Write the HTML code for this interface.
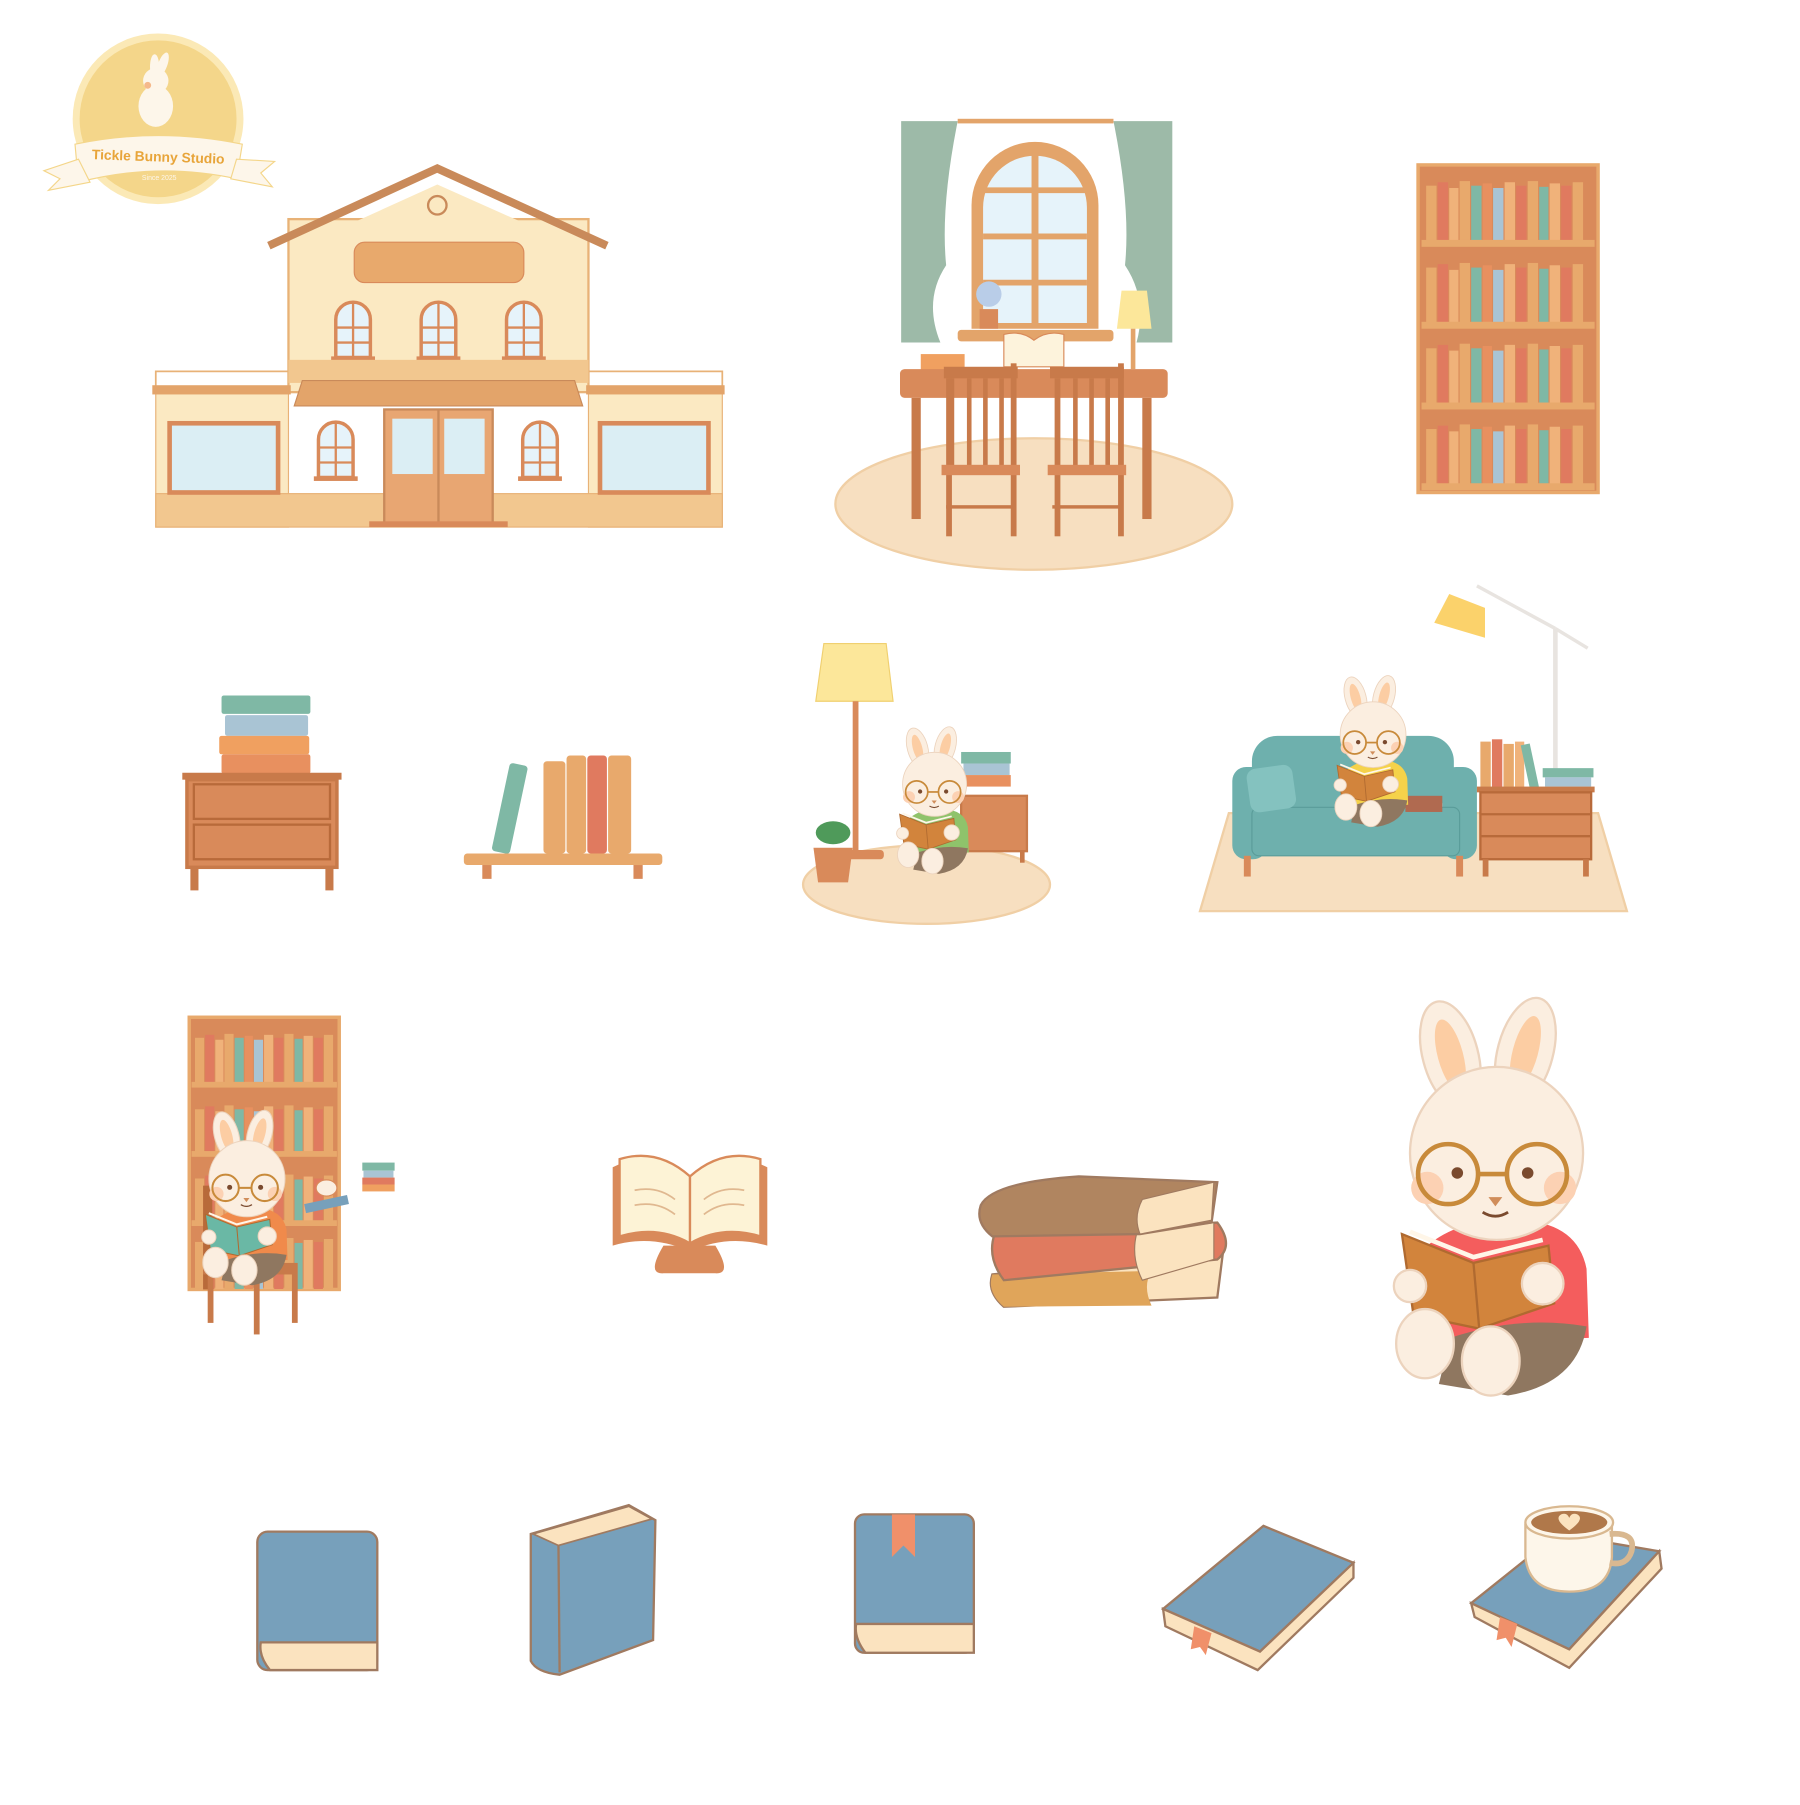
<!DOCTYPE html>
<html><head><meta charset="utf-8"><style>
html,body{margin:0;padding:0;background:#fff;}
svg{display:block;}
</style></head><body>
<svg width="1800" height="1805" viewBox="0 0 1560 1565" preserveAspectRatio="none" xmlns="http://www.w3.org/2000/svg">
<defs>
<g id="bunny">
  <ellipse cx="-40" cy="-85" rx="24" ry="48" transform="rotate(-15 -40 -85)" fill="#fbeee0" stroke="#ecd3bd" stroke-width="2"/>
  <ellipse cx="-40" cy="-85" rx="11" ry="32" transform="rotate(-15 -40 -85)" fill="#fccda3"/>
  <ellipse cx="25" cy="-88" rx="24" ry="48" transform="rotate(15 25 -88)" fill="#fbeee0" stroke="#ecd3bd" stroke-width="2"/>
  <ellipse cx="25" cy="-88" rx="11" ry="32" transform="rotate(15 25 -88)" fill="#fccda3"/>
  <path d="M-60 80 Q-30 55 20 58 Q70 60 78 100 L80 160 L-55 165 Z" style="fill:var(--shirt,#f45d5d)"/>
  <path d="M-40 160 Q20 140 78 150 Q70 200 10 210 L-50 200 Z" fill="#8f7760"/>
  <circle cx="0" cy="0" r="75" fill="#fbeee0" stroke="#ecd3bd" stroke-width="2"/>
  <circle cx="-60" cy="30" r="14" fill="#fcd1b3"/><circle cx="55" cy="30" r="14" fill="#fcd1b3"/>
  <circle cx="-42" cy="18" r="26" fill="none" stroke="#c88a3a" stroke-width="4"/>
  <circle cx="35" cy="18" r="26" fill="none" stroke="#c88a3a" stroke-width="4"/>
  <line x1="-16" y1="18" x2="9" y2="18" stroke="#c88a3a" stroke-width="4"/>
  <circle cx="-34" cy="17" r="5" fill="#7a4a2e"/><circle cx="27" cy="17" r="5" fill="#7a4a2e"/>
  <path d="M-7 38 L5 38 L-1 46 Z" fill="#d08d5a"/>
  <path d="M-12 51 Q-1 58 10 51" fill="none" stroke="#7a4a2e" stroke-width="2.5"/>
  <path d="M-82 70 L-20 95 L45 80 L50 130 L-15 152 L-72 140 Z" style="fill:var(--book,#d2843c)" stroke="#b06a30" stroke-width="2"/>
  <line x1="-20" y1="95" x2="-15" y2="152" stroke="#b06a30" stroke-width="2"/>
  <path d="M-75 68 L-20 90 L40 75" fill="none" stroke="#fff6e8" stroke-width="4"/>
  <circle cx="-75" cy="115" r="14" fill="#fbeee0" stroke="#ecd3bd" stroke-width="2"/>
  <circle cx="40" cy="113" r="18" fill="#fbeee0" stroke="#ecd3bd" stroke-width="2"/>
  <ellipse cx="-62" cy="165" rx="25" ry="30" fill="#fbeee0" stroke="#ecd3bd" stroke-width="2"/>
  <ellipse cx="-5" cy="180" rx="25" ry="30" fill="#fbeee0" stroke="#ecd3bd" stroke-width="2"/>
</g>
<g id="row">
  <rect x="0" y="8" width="9" height="48" fill="#e8a96c"/>
  <rect x="10" y="5" width="9" height="51" fill="#e07a5f"/>
  <rect x="20" y="10" width="8" height="46" fill="#f0b27a"/>
  <rect x="29" y="4" width="9" height="52" fill="#e8a96c"/>
  <rect x="39" y="8" width="9" height="48" fill="#7fb8a5"/>
  <rect x="49" y="6" width="8" height="50" fill="#e8905f"/>
  <rect x="58" y="10" width="9" height="46" fill="#a9c4d4"/>
  <rect x="68" y="5" width="9" height="51" fill="#f0b27a"/>
  <rect x="78" y="8" width="9" height="48" fill="#e07a5f"/>
  <rect x="88" y="4" width="9" height="52" fill="#e8a96c"/>
  <rect x="98" y="9" width="8" height="47" fill="#7fb8a5"/>
  <rect x="107" y="6" width="9" height="50" fill="#f0b27a"/>
  <rect x="117" y="8" width="9" height="48" fill="#e07a5f"/>
  <rect x="127" y="5" width="9" height="51" fill="#e8a96c"/>
</g>
<g id="win">
  <path d="M-15 48 L-15 15 A15 15 0 0 1 15 15 L15 48 Z" fill="#e6f3fa" stroke="#d98a5a" stroke-width="3"/>
  <line x1="0" y1="0" x2="0" y2="48" stroke="#d98a5a" stroke-width="2"/>
  <line x1="-15" y1="22" x2="15" y2="22" stroke="#d98a5a" stroke-width="2"/>
  <line x1="-15" y1="35" x2="15" y2="35" stroke="#d98a5a" stroke-width="2"/>
  <rect x="-19" y="47" width="38" height="4" fill="#d98a5a"/>
</g>
</defs>

<!-- Logo -->
<circle cx="137" cy="103" r="74" fill="#fbe9b6"/>
<circle cx="137" cy="103" r="68" fill="#f4d68a"/>
<ellipse cx="135" cy="92" rx="15" ry="18" fill="#fdf6ea"/>
<circle cx="135" cy="70" r="11" fill="#fdf6ea"/>
<ellipse cx="134" cy="58" rx="4" ry="11" fill="#fdf6ea"/><ellipse cx="141" cy="56" rx="4" ry="11" transform="rotate(20 141 56)" fill="#fdf6ea"/>
<circle cx="128" cy="74" r="3" fill="#f5b98b"/>
<path d="M65 125 Q137 110 210 125 L205 155 Q137 140 68 158 Z" fill="#fdf6ea" stroke="#f4d68a"/>
<path d="M68 138 L38 148 L52 155 L42 165 L78 158 Z" fill="#fdf6ea" stroke="#f4d68a"/>
<path d="M205 138 L238 140 L226 150 L236 162 L200 155 Z" fill="#fdf6ea" stroke="#f4d68a"/>
<text x="137" y="140" font-family="Liberation Sans, sans-serif" font-size="12" font-weight="bold" fill="#e8a53a" text-anchor="middle" transform="rotate(2 137 140)">Tickle Bunny Studio</text>
<text x="138" y="156" font-family="Liberation Sans, sans-serif" font-size="6" fill="#fdf6ea" text-anchor="middle">Since 2025</text>

<!-- House -->
<rect x="135" y="322" width="115" height="13" fill="none" stroke="#e8b277" stroke-width="1.5"/>
<rect x="510" y="322" width="116" height="13" fill="none" stroke="#e8b277" stroke-width="1.5"/>
<rect x="250" y="190" width="260" height="150" fill="#fbe9c2" stroke="#e8b277" stroke-width="2"/>
<path d="M379 160 L262 213 L498 213 Z" fill="#fbe9c2"/>
<path d="M233 213 L379 146 L526 213" fill="none" stroke="#c98a5a" stroke-width="7"/>
<circle cx="379" cy="178" r="8" fill="#fbe9c2" stroke="#c98a5a" stroke-width="2"/>
<rect x="307" y="210" width="147" height="35" rx="9" fill="#e8a96c" stroke="#d98a5a"/>
<use href="#win" x="306" y="262"/><use href="#win" x="380" y="262"/><use href="#win" x="454" y="262"/>
<rect x="135" y="335" width="115" height="122" fill="#fbe9c2" stroke="#e8b277"/>
<rect x="510" y="335" width="116" height="122" fill="#fbe9c2" stroke="#e8b277"/>
<rect x="132" y="334" width="120" height="8" fill="#e3a46a"/>
<rect x="508" y="334" width="120" height="8" fill="#e3a46a"/>
<rect x="250" y="312" width="260" height="20" fill="#f2c78f"/>
<rect x="135" y="428" width="491" height="29" fill="#f2c78f" stroke="#e8b277"/>
<path d="M262 330 L498 330 L505 352 L255 352 Z" fill="#e3a46a" stroke="#c98a5a"/>
<rect x="147" y="367" width="94" height="60" fill="#dbeef4" stroke="#d98a5a" stroke-width="4"/>
<rect x="520" y="367" width="94" height="60" fill="#dbeef4" stroke="#d98a5a" stroke-width="4"/>
<rect x="333" y="355" width="94" height="100" fill="#e8a672" stroke="#c98a5a" stroke-width="2"/>
<rect x="340" y="363" width="35" height="48" fill="#dbeef4"/><rect x="385" y="363" width="35" height="48" fill="#dbeef4"/>
<line x1="380" y1="355" x2="380" y2="455" stroke="#c98a5a" stroke-width="2"/>
<rect x="320" y="452" width="120" height="5" fill="#d98a5a"/>
<use href="#win" x="291" y="366"/><use href="#win" x="468" y="366"/>

<!-- Desk scene -->
<ellipse cx="896" cy="437" rx="172" ry="57" fill="#f7dfc0" stroke="#f0cfa5" stroke-width="2"/>
<rect x="830" y="103" width="135" height="4" fill="#e3a46a"/>
<path d="M781 105 L830 105 Q815 180 820 230 Q800 260 815 297 L781 297 Z" fill="#9dbaa8"/>
<path d="M1016 105 L965 105 Q980 180 975 230 Q995 260 985 297 L1016 297 Z" fill="#9dbaa8"/>
<path d="M842 285 L842 178 A55 55 0 0 1 952 178 L952 285 Z" fill="#e3a46a"/>
<path d="M852 280 L852 180 A45 45 0 0 1 942 180 L942 280 Z" fill="#e6f3fa"/>
<line x1="897" y1="133" x2="897" y2="280" stroke="#e3a46a" stroke-width="6"/>
<line x1="852" y1="165" x2="942" y2="165" stroke="#e3a46a" stroke-width="5"/>
<line x1="852" y1="205" x2="942" y2="205" stroke="#e3a46a" stroke-width="5"/>
<line x1="852" y1="245" x2="942" y2="245" stroke="#e3a46a" stroke-width="5"/>
<rect x="830" y="286" width="135" height="10" rx="3" fill="#e3a46a"/>
<circle cx="857" cy="255" r="11" fill="#b9cde8"/><rect x="849" y="268" width="16" height="17" fill="#d98a5a"/>
<path d="M968 285 L972 252 L994 252 L998 285 Z" fill="#fce79a"/><rect x="980" y="285" width="4" height="35" fill="#e3a46a"/>
<path d="M870 318 L870 290 Q885 286 896 295 Q908 286 922 290 L922 318 Z" fill="#fdf3dc" stroke="#d98a5a"/>
<rect x="798" y="307" width="38" height="14" fill="#f0a060"/>
<rect x="780" y="320" width="232" height="25" rx="4" fill="#d98a5a"/>
<rect x="790" y="345" width="8" height="105" fill="#c87a4a"/><rect x="990" y="345" width="8" height="105" fill="#c87a4a"/>
<g fill="#c87a4a">
<rect x="818" y="318" width="64" height="10"/><rect x="822" y="328" width="5" height="78"/><rect x="838" y="328" width="4" height="78"/><rect x="852" y="328" width="4" height="78"/><rect x="866" y="328" width="4" height="78"/><rect x="876" y="315" width="5" height="150"/><rect x="820" y="328" width="5" height="137"/>
<rect x="816" y="403" width="68" height="9" fill="#d98a5a"/><rect x="820" y="438" width="60" height="3"/>
<rect x="910" y="318" width="64" height="10"/><rect x="914" y="328" width="5" height="137"/><rect x="930" y="328" width="4" height="78"/><rect x="944" y="328" width="4" height="78"/><rect x="958" y="328" width="4" height="78"/><rect x="969" y="315" width="5" height="150"/>
<rect x="908" y="403" width="68" height="9" fill="#d98a5a"/><rect x="912" y="438" width="60" height="3"/>
</g>

<!-- Bookshelf -->
<rect x="1229" y="143" width="156" height="284" fill="#d98a5a" stroke="#e8a96c" stroke-width="3"/>
<use href="#row" x="1236" y="153"/><use href="#row" x="1236" y="224"/><use href="#row" x="1236" y="294"/><use href="#row" x="1236" y="364"/>
<g fill="#e8a96c"><rect x="1232" y="208" width="150" height="6"/><rect x="1232" y="279" width="150" height="6"/><rect x="1232" y="349" width="150" height="6"/><rect x="1232" y="419" width="150" height="6"/></g>

<!-- Dresser -->
<rect x="192" y="603" width="77" height="16" rx="2" fill="#7fb8a5"/>
<rect x="195" y="620" width="72" height="18" rx="2" fill="#a9c4d4"/>
<rect x="190" y="638" width="78" height="16" rx="2" fill="#f0a060"/>
<rect x="192" y="654" width="77" height="17" rx="2" fill="#e8905f"/>
<rect x="158" y="670" width="138" height="6" fill="#c87a4a"/>
<rect x="162" y="676" width="130" height="76" fill="#d98a5a" stroke="#c87a4a" stroke-width="3"/>
<rect x="168" y="680" width="118" height="30" fill="#d98a5a" stroke="#b86a3a" stroke-width="2"/>
<rect x="168" y="715" width="118" height="30" fill="#d98a5a" stroke="#b86a3a" stroke-width="2"/>
<rect x="165" y="752" width="7" height="20" fill="#c87a4a"/><rect x="282" y="752" width="7" height="20" fill="#c87a4a"/>

<!-- Wall shelf -->
<rect x="434" y="662" width="16" height="78" rx="3" fill="#7fb8a5" transform="rotate(12 442 700)"/>
<rect x="471" y="660" width="19" height="80" rx="3" fill="#e8a96c"/>
<rect x="491" y="655" width="17" height="85" rx="3" fill="#e8a96c"/>
<rect x="509" y="655" width="17" height="85" rx="3" fill="#e07a5f"/>
<rect x="527" y="655" width="20" height="85" rx="3" fill="#e8a96c"/>
<rect x="402" y="740" width="172" height="10" rx="3" fill="#e8a96c"/>
<rect x="418" y="750" width="8" height="12" fill="#d98a5a"/><rect x="549" y="750" width="8" height="12" fill="#d98a5a"/>

<!-- Lamp scene -->
<ellipse cx="803" cy="767" rx="107" ry="34" fill="#f7dfc0" stroke="#f0cfa5" stroke-width="2"/>
<path d="M714 558 L768 558 L774 608 L707 608 Z" fill="#fce79a" stroke="#f0d070"/>
<rect x="739" y="608" width="5" height="130" fill="#d98a5a"/>
<rect x="728" y="737" width="38" height="8" rx="3" fill="#d98a5a"/>
<rect x="833" y="652" width="43" height="10" fill="#7fb8a5"/><rect x="835" y="662" width="40" height="10" fill="#a9c4d4"/><rect x="833" y="672" width="43" height="10" fill="#e8905f"/>
<rect x="833" y="690" width="57" height="48" fill="#d98a5a" stroke="#c87a4a" stroke-width="2"/>
<rect x="884" y="738" width="4" height="10" fill="#c87a4a"/>
<ellipse cx="722" cy="722" rx="15" ry="10" fill="#4f9a5a"/>
<path d="M705 735 L739 735 L735 765 L709 765 Z" fill="#d98a5a"/>
<use href="#bunny" transform="translate(810 680) scale(0.37)" style="--shirt:#8fc36b"/>

<!-- Sofa scene -->
<path d="M1040 790 L1410 790 L1385 705 L1065 705 Z" fill="#f7dfc0" stroke="#f0cfa5" stroke-width="2"/>
<rect x="1085" y="638" width="175" height="62" rx="22" fill="#6eb0ad"/>
<rect x="1068" y="665" width="30" height="80" rx="12" fill="#6eb0ad"/>
<rect x="1250" y="665" width="30" height="80" rx="12" fill="#6eb0ad"/>
<rect x="1085" y="700" width="180" height="42" rx="6" fill="#6eb0ad" stroke="#5a9c99"/>
<rect x="1082" y="665" width="40" height="38" rx="8" fill="#84c2bf" transform="rotate(-8 1100 685)"/>
<rect x="1078" y="742" width="6" height="18" fill="#d98a5a"/><rect x="1262" y="742" width="6" height="18" fill="#d98a5a"/>
<line x1="1348" y1="545" x2="1348" y2="668" stroke="#e8e4e0" stroke-width="4"/>
<line x1="1348" y1="545" x2="1280" y2="508" stroke="#e8e4e0" stroke-width="3"/>
<line x1="1348" y1="545" x2="1376" y2="562" stroke="#e8e4e0" stroke-width="3"/>
<path d="M1256 515 L1243 540 L1287 553 L1287 527 Z" fill="#fbd26b"/>
<rect x="1283" y="643" width="9" height="40" fill="#e8a96c"/><rect x="1293" y="641" width="9" height="42" fill="#e07a5f"/><rect x="1303" y="645" width="9" height="38" fill="#e8a96c"/><rect x="1313" y="643" width="8" height="40" fill="#f0b27a"/><rect x="1322" y="645" width="8" height="40" fill="#7fb8a5" transform="rotate(-12 1326 665)"/>
<rect x="1337" y="666" width="44" height="8" fill="#7fb8a5"/><rect x="1339" y="674" width="40" height="8" fill="#a9c4d4"/>
<rect x="1280" y="682" width="102" height="5" fill="#c87a4a"/>
<rect x="1283" y="687" width="96" height="58" fill="#d98a5a" stroke="#b86a3a" stroke-width="2"/>
<line x1="1283" y1="706" x2="1379" y2="706" stroke="#b86a3a" stroke-width="2"/><line x1="1283" y1="725" x2="1379" y2="725" stroke="#b86a3a" stroke-width="2"/>
<rect x="1285" y="745" width="5" height="15" fill="#c87a4a"/><rect x="1372" y="745" width="5" height="15" fill="#c87a4a"/>
<rect x="1218" y="690" width="32" height="14" fill="#b06a50"/>
<use href="#bunny" transform="translate(1190 637) scale(0.38)" style="--shirt:#f5d24a"/>

<!-- Row 3 bookshelf -->
<rect x="164" y="882" width="130" height="236" fill="#d98a5a" stroke="#e8a96c" stroke-width="3"/>
<use href="#row" transform="translate(169 893) scale(0.88 0.85)"/>
<use href="#row" transform="translate(169 955) scale(0.88 0.85)"/>
<use href="#row" transform="translate(169 1015) scale(0.88 0.85)"/>
<use href="#row" transform="translate(169 1070) scale(0.88 0.85)"/>
<g fill="#e8a96c"><rect x="166" y="938" width="126" height="5"/><rect x="166" y="998" width="126" height="5"/><rect x="166" y="1058" width="126" height="5"/></g>
<rect x="176" y="1028" width="8" height="90" fill="#b86a3a"/>
<rect x="176" y="1095" width="82" height="10" fill="#c87a4a"/>
<rect x="180" y="1105" width="5" height="42" fill="#c87a4a"/><rect x="220" y="1105" width="5" height="52" fill="#c87a4a"/><rect x="253" y="1105" width="5" height="42" fill="#c87a4a"/>
<use href="#bunny" transform="translate(214 1022) scale(0.44)" style="--shirt:#f08a4b;--book:#6ab8a5"/>
<rect x="264" y="1040" width="38" height="8" fill="#77a0bb" transform="rotate(-12 283 1044)"/>
<ellipse cx="283" cy="1030" rx="9" ry="7" fill="#fbeee0" stroke="#d98a5a"/>
<rect x="314" y="1008" width="28" height="7" fill="#7fb8a5"/><rect x="315" y="1015" width="26" height="6" fill="#a9c4d4"/><rect x="314" y="1021" width="28" height="6" fill="#e07a5f"/><rect x="314" y="1027" width="28" height="6" fill="#f0a060"/>

<!-- Open book on stand -->
<path d="M575 1080 L620 1080 Q635 1105 620 1104 L575 1104 Q560 1105 575 1080 Z" fill="#d98a5a"/>
<path d="M531 1012 Q565 995 598 1022 Q630 995 665 1012 L665 1080 Q630 1070 598 1085 Q565 1070 531 1080 Z" fill="#d98a5a"/>
<path d="M537 1005 Q570 995 598 1020 L598 1078 Q570 1062 537 1072 Z" fill="#fdf3d6" stroke="#d98a5a" stroke-width="2"/>
<path d="M659 1005 Q626 995 598 1020 L598 1078 Q626 1062 659 1072 Z" fill="#fdf3d6" stroke="#d98a5a" stroke-width="2"/>
<g stroke="#e0b890" stroke-width="1.5" fill="none"><path d="M550 1032 Q570 1028 585 1040"/><path d="M550 1045 Q570 1041 585 1053"/><path d="M610 1040 Q625 1028 645 1032"/><path d="M610 1053 Q625 1041 645 1045"/></g>

<!-- Book stack -->
<path d="M860 1105 L1060 1085 L1055 1125 L870 1133 Q855 1120 860 1105 Z" fill="#fbe3bf" stroke="#a07a60" stroke-width="2"/>
<path d="M860 1105 Q855 1120 870 1133 L998 1132 Q990 1115 998 1102 Z" fill="#e0a55a"/>
<path d="M862 1070 L1055 1060 Q1070 1080 1055 1092 L870 1110 Q855 1090 862 1070 Z" fill="#e07a5f" stroke="#a07a60" stroke-width="2"/>
<path d="M985 1070 L1052 1060 L1052 1092 L990 1110 Q980 1090 985 1070 Z" fill="#fbe3bf" stroke="#a07a60"/>
<path d="M850 1045 Q860 1025 935 1020 L1055 1025 L1050 1060 L988 1070 L860 1072 Q845 1060 850 1045 Z" fill="#b08560" stroke="#a07a60" stroke-width="2"/>
<path d="M990 1040 L1052 1025 L1050 1058 L988 1070 Q982 1055 990 1040 Z" fill="#fbe3bf" stroke="#a07a60"/>

<!-- Big bunny -->
<use href="#bunny" x="1297" y="1000"/>

<!-- Row 4 books -->
<rect x="223" y="1328" width="104" height="120" rx="9" fill="#77a0bb" stroke="#a07a60" stroke-width="2"/>
<path d="M226 1424 L327 1424 L327 1448 L234 1448 Q224 1436 226 1424 Z" fill="#fbe3bf" stroke="#a07a60" stroke-width="2"/>

<path d="M460 1330 L545 1305 L568 1318 L566 1422 L485 1452 Q465 1450 460 1440 Z" fill="#77a0bb" stroke="#a07a60" stroke-width="2"/>
<path d="M462 1330 L545 1306 L565 1317 L484 1340 Z" fill="#fbe3bf" stroke="#a07a60" stroke-width="1.5"/>
<line x1="484" y1="1340" x2="485" y2="1450" stroke="#a07a60" stroke-width="2"/>

<rect x="741" y="1313" width="103" height="120" rx="8" fill="#77a0bb" stroke="#a07a60" stroke-width="2"/>
<path d="M742 1408 L844 1408 L844 1433 L750 1433 Q740 1420 742 1408 Z" fill="#fbe3bf" stroke="#a07a60" stroke-width="2"/>
<path d="M773 1313 L793 1313 L793 1350 L783 1340 L773 1350 Z" fill="#f0906a"/>

<path d="M1008 1395 L1095 1323 L1173 1355 L1092 1432 Z" fill="#77a0bb" stroke="#a07a60" stroke-width="2"/>
<path d="M1008 1395 L1010 1410 L1090 1448 L1173 1368 L1173 1355 L1092 1432 Z" fill="#fbe3bf" stroke="#a07a60" stroke-width="2"/>
<path d="M1035 1410 L1050 1416 L1045 1435 L1040 1428 L1032 1430 Z" fill="#f0906a"/>

<path d="M1275 1390 L1350 1330 L1438 1345 L1360 1430 Z" fill="#77a0bb" stroke="#a07a60" stroke-width="2"/>
<path d="M1275 1390 L1278 1402 L1360 1446 L1440 1360 L1438 1345 L1360 1430 Z" fill="#fbe3bf" stroke="#a07a60" stroke-width="2"/>
<path d="M1300 1402 L1315 1408 L1310 1428 L1305 1420 L1297 1422 Z" fill="#f0906a"/>
<path d="M1322 1322 L1322 1350 Q1325 1380 1360 1380 Q1395 1380 1397 1350 L1397 1322 Z" fill="#fdf6ea" stroke="#d9b890" stroke-width="2"/>
<path d="M1395 1330 Q1418 1328 1414 1345 Q1410 1358 1395 1355" fill="none" stroke="#d9b890" stroke-width="5"/>
<ellipse cx="1360" cy="1320" rx="38" ry="14" fill="#fdf6ea" stroke="#d9b890" stroke-width="2"/>
<ellipse cx="1360" cy="1320" rx="33" ry="10" fill="#b0784a"/>
<path d="M1360 1327 Q1346 1317 1353 1313 Q1358 1311 1360 1316 Q1362 1311 1367 1313 Q1374 1317 1360 1327 Z" fill="#fbe3bf"/>
</svg>
</body></html>
